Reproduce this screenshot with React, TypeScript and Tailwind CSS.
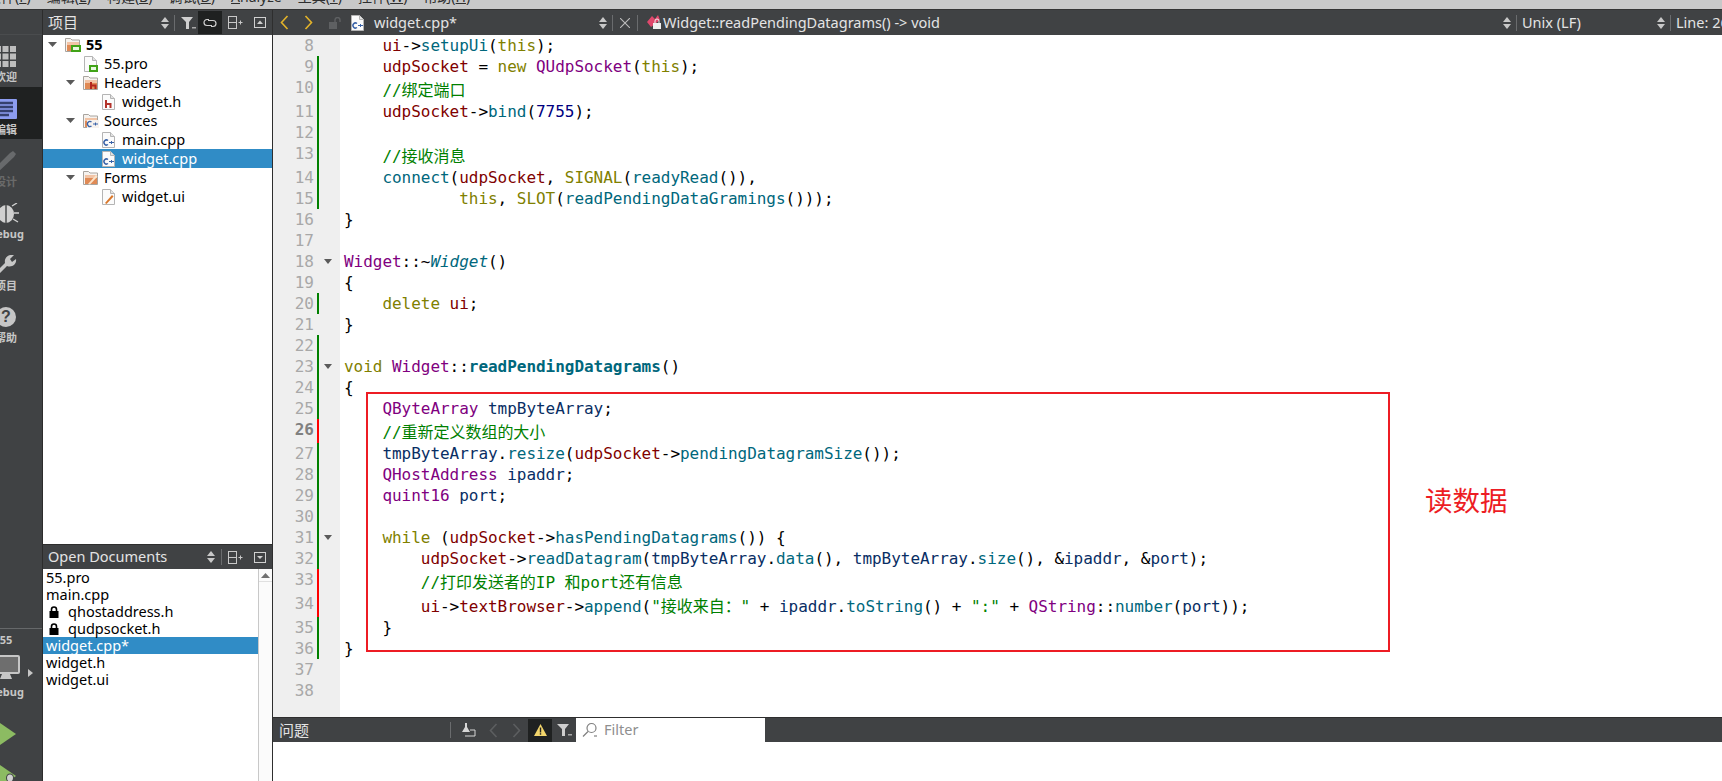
import React from "react";

const ui = "font-['Noto_Sans','Noto_Sans_CJK_SC',sans-serif]";

type Tok = [string, string?];
const C: Record<string, string> = {
  k: "text-[#808000]",
  t: "text-[#800080]",
  m: "text-[#800000]",
  f: "text-[#00677c]",
  c: "text-[#008000]",
  n: "text-[#000080]",
  v: "text-[#092e64]",
  b: "text-[#00677c] font-bold",
  i: "text-[#00677c] italic",
};

type Line = { n: number; toks: Tok[]; tall?: boolean; bar?: "g" | "r"; fold?: boolean; cur?: boolean };

const lines: Line[] = [
  { n: 8, toks: [["    "], ["ui", "m"], ["->"], ["setupUi", "f"], ["("], ["this", "k"], [");"]] },
  { n: 9, bar: "g", toks: [["    "], ["udpSocket", "m"], [" = "], ["new", "k"], [" "], ["QUdpSocket", "t"], ["("], ["this", "k"], [");"]] },
  { n: 10, bar: "g", tall: true, toks: [["    "], ["//绑定端口", "c"]] },
  { n: 11, bar: "g", toks: [["    "], ["udpSocket", "m"], ["->"], ["bind", "f"], ["("], ["7755", "n"], [");"]] },
  { n: 12, bar: "g", toks: [] },
  { n: 13, bar: "g", tall: true, toks: [["    "], ["//接收消息", "c"]] },
  { n: 14, bar: "g", toks: [["    "], ["connect", "f"], ["("], ["udpSocket", "m"], [", "], ["SIGNAL", "k"], ["("], ["readyRead", "f"], ["()),"]] },
  { n: 15, bar: "g", toks: [["            "], ["this", "k"], [", "], ["SLOT", "k"], ["("], ["readPendingDataGramings", "f"], ["()));"]] },
  { n: 16, toks: [["}"]] },
  { n: 17, toks: [] },
  { n: 18, fold: true, toks: [["Widget", "t"], ["::~"], ["Widget", "i"], ["()"]] },
  { n: 19, toks: [["{"]] },
  { n: 20, bar: "g", toks: [["    "], ["delete", "k"], [" "], ["ui", "m"], [";"]] },
  { n: 21, toks: [["}"]] },
  { n: 22, bar: "g", toks: [] },
  { n: 23, bar: "g", fold: true, toks: [["void", "k"], [" "], ["Widget", "t"], ["::"], ["readPendingDatagrams", "b"], ["()"]] },
  { n: 24, bar: "g", toks: [["{"]] },
  { n: 25, bar: "g", toks: [["    "], ["QByteArray", "t"], [" "], ["tmpByteArray", "v"], [";"]] },
  { n: 26, bar: "r", tall: true, cur: true, toks: [["    "], ["//重新定义数组的大小", "c"]] },
  { n: 27, bar: "g", toks: [["    "], ["tmpByteArray", "v"], ["."], ["resize", "f"], ["("], ["udpSocket", "m"], ["->"], ["pendingDatagramSize", "f"], ["());"]] },
  { n: 28, bar: "g", toks: [["    "], ["QHostAddress", "t"], [" "], ["ipaddr", "v"], [";"]] },
  { n: 29, bar: "g", toks: [["    "], ["quint16", "t"], [" "], ["port", "v"], [";"]] },
  { n: 30, bar: "g", toks: [] },
  { n: 31, bar: "g", fold: true, toks: [["    "], ["while", "k"], [" ("], ["udpSocket", "m"], ["->"], ["hasPendingDatagrams", "f"], ["()) {"]] },
  { n: 32, bar: "g", toks: [["        "], ["udpSocket", "m"], ["->"], ["readDatagram", "f"], ["("], ["tmpByteArray", "v"], ["."], ["data", "f"], ["(), "], ["tmpByteArray", "v"], ["."], ["size", "f"], ["(), &"], ["ipaddr", "v"], [", &"], ["port", "v"], [");"]] },
  { n: 33, bar: "r", tall: true, toks: [["        "], ["//打印发送者的IP 和port还有信息", "c"]] },
  { n: 34, bar: "r", tall: true, toks: [["        "], ["ui", "m"], ["->"], ["textBrowser", "m"], ["->"], ["append", "f"], ["("], ['"接收来自："', "c"], [" + "], ["ipaddr", "v"], ["."], ["toString", "f"], ["() + "], ['":"', "c"], [" + "], ["QString", "t"], ["::"], ["number", "f"], ["("], ["port", "v"], ["));"]] },
  { n: 35, bar: "g", toks: [["    }"]] },
  { n: 36, bar: "g", toks: [["}"]] },
  { n: 37, toks: [] },
  { n: 38, toks: [] },
];

function Sort() {
  return (
    <svg width="10" height="14" viewBox="0 0 10 14" className="shrink-0">
      <path d="M5 1 L9 6 H1 Z" fill="#c8c8c8" />
      <path d="M1 8 H9 L5 13 Z" fill="#c8c8c8" />
    </svg>
  );
}
function Sep() {
  return <div className="w-px h-[16px] bg-[#6a6c6e] shrink-0" />;
}
function Funnel() {
  return (
    <svg width="18" height="14" viewBox="0 0 18 14" className="shrink-0">
      <path d="M1 1 H13 L9 6 V13 H6 V6 Z" fill="#cfcfcf" />
      <rect x="12" y="11" width="4" height="1.5" fill="#a8a8a8" />
    </svg>
  );
}
function LinkIcon() {
  return (
    <svg width="14" height="10" viewBox="0 0 14 10" fill="none" stroke="#d0d0d0" strokeWidth="1.2">
      <path d="M6 1.5 H4 A3 3 0 0 0 4 7.5 H9" />
      <path d="M8 8.5 H10 A3 3 0 0 0 10 2.5 H5" />
    </svg>
  );
}
function Split() {
  return (
    <svg width="15" height="13" viewBox="0 0 15 13" fill="none" stroke="#c8c8c8" strokeWidth="1" className="shrink-0">
      <rect x="0.5" y="0.5" width="8" height="12" />
      <path d="M0.5 6.5 H8.5" />
      <path d="M10.5 6.5 H14.5 M12.5 4.5 V8.5" />
    </svg>
  );
}
function ClosePanel({ down }: { down?: boolean }) {
  return (
    <svg width="12" height="11" viewBox="0 0 12 11" className="shrink-0">
      <rect x="0.5" y="0.5" width="11" height="10" fill="none" stroke="#d0d0d0" />
      {down ? <path d="M3 4 H9 L6 7 Z" fill="#d0d0d0" /> : <path d="M3 7 L6 3.5 L9 7 Z" fill="#d0d0d0" />}
    </svg>
  );
}
function Chev({ left, color, w = 9, h = 15 }: { left?: boolean; color: string; w?: number; h?: number }) {
  return (
    <svg width={w} height={h} viewBox="0 0 9 15" fill="none" stroke={color} strokeWidth="1.6" className="shrink-0">
      <path d={left ? "M7.5 1 L1.5 7.5 L7.5 14" : "M1.5 1 L7.5 7.5 L1.5 14"} />
    </svg>
  );
}
function Arrow() {
  return (
    <svg width="9" height="5" viewBox="0 0 9 5" className="shrink-0">
      <path d="M0 0 H9 L4.5 5 Z" fill="#5a5a5a" />
    </svg>
  );
}
function FileIcon({ kind }: { kind: "qt" | "h" | "cpp" | "ui" }) {
  return (
    <svg width="15" height="16" viewBox="0 0 15 16" className="shrink-0">
      <path d="M1.5 0.5 H9.5 L13.5 4.5 V15.5 H1.5 Z" fill="#fbfbfb" stroke="#b4b4b4" />
      <path d="M9.5 0.5 V4.5 H13.5" fill="#e2e2e2" stroke="#b4b4b4" />
      {kind === "qt" && (
        <>
          <rect x="6" y="9" width="9" height="7" fill="#41a317" />
          <rect x="8" y="11" width="5" height="3" fill="#e8f8e0" />
        </>
      )}
      {kind === "h" && <path d="M5 6 V14 M5 10 H9.5 V14" fill="none" stroke="#b3332b" strokeWidth="2" />}
      {kind === "cpp" && (
        <>
          <path d="M7 8.5 A2.5 2.5 0 1 0 7 12.5" fill="none" stroke="#3a63a8" strokeWidth="1.5" />
          <path d="M8 10.5 H13 M10.5 9 V12" stroke="#3a63a8" strokeWidth="1" />
        </>
      )}
      {kind === "ui" && <path d="M4 14 L11 6 L12.5 7.5 L5.5 15 Z" fill="#d9772a" />}
    </svg>
  );
}
function FolderIcon({ kind }: { kind: "qt" | "h" | "cpp" | "ui" }) {
  return (
    <svg width="16" height="15" viewBox="0 0 16 15" className="shrink-0">
      <path d="M0.5 1.5 H5.5 L7 3 H14.5 V14.5 H0.5 Z" fill="#f6f2ee" stroke="#a8a49f" />
      <path d="M2 5 H14 V14 H2 Z" fill="#e08a55" />
      <path d="M2 5 H14 V8 H2 Z" fill="#f2c4a6" />
      {kind === "qt" && <rect x="6" y="8" width="10" height="7" fill="#41a317" />}
      {kind === "qt" && <rect x="8" y="10" width="6" height="3" fill="#e8f8e0" />}
      {kind === "h" && <path d="M8 7 V14 M8 10.5 H12.5 V14" fill="none" stroke="#b3261e" strokeWidth="2" />}
      {kind === "cpp" && (
        <>
          <rect x="4" y="7" width="12" height="8" fill="#f6f2ee" />
          <path d="M8.5 9 A2.5 2.5 0 1 0 8.5 13" fill="none" stroke="#3a63a8" strokeWidth="1.4" />
          <path d="M10 11 H15 M12.5 9.5 V12.5" stroke="#3a63a8" />
        </>
      )}
      {kind === "ui" && <path d="M5 14 L13 5 L14.5 6.5 L7 14.5 Z" fill="#fbe3c8" />}
    </svg>
  );
}

type TreeRow = { label: string; level: number; folder?: boolean; kind: "qt" | "h" | "cpp" | "ui"; sel?: boolean; bold?: boolean };
const tree: TreeRow[] = [
  { label: "55", level: 0, folder: true, kind: "qt", bold: true },
  { label: "55.pro", level: 1, kind: "qt" },
  { label: "Headers", level: 1, folder: true, kind: "h" },
  { label: "widget.h", level: 2, kind: "h" },
  { label: "Sources", level: 1, folder: true, kind: "cpp" },
  { label: "main.cpp", level: 2, kind: "cpp" },
  { label: "widget.cpp", level: 2, kind: "cpp", sel: true },
  { label: "Forms", level: 1, folder: true, kind: "ui" },
  { label: "widget.ui", level: 2, kind: "ui" },
];
const indent = ["pl-[0px]", "pl-[18px]", "pl-[36px]"];

function Tree() {
  return (
    <div className="flex-1 bg-white overflow-hidden">
      {tree.map((r) => (
        <div key={r.label} className={`h-[19px] flex items-center ${indent[r.level]} ${r.sel ? "bg-[#308cc6] text-white" : "text-black"}`}>
          <div className="w-[22px] pl-[5px] flex shrink-0">{r.folder && <Arrow />}</div>
          <div className="w-[21px] shrink-0">{r.folder ? <FolderIcon kind={r.kind} /> : <FileIcon kind={r.kind} />}</div>
          <span className={`text-[14.5px] ${r.bold ? "font-bold" : ""}`}>{r.label}</span>
        </div>
      ))}
    </div>
  );
}

function LockIcon({ color = "#000" }: { color?: string }) {
  return (
    <svg width="10" height="12" viewBox="0 0 10 12" className="shrink-0">
      <path d="M2.5 5.5 V3.5 A2.5 2.5 0 0 1 7.5 3.5 V5.5" fill="none" stroke={color} strokeWidth="1.6" />
      <rect x="0.5" y="5" width="9" height="7" fill={color} />
    </svg>
  );
}

function OpenLock() {
  return (
    <svg width="12" height="12" viewBox="0 0 12 12" className="shrink-0">
      <path d="M6 5.5 V3 A2.5 2.5 0 0 1 11 3 V5" fill="none" stroke="#5e6062" strokeWidth="1.4" />
      <rect x="0" y="5" width="8" height="7" fill="#5e6062" />
    </svg>
  );
}

const docs = [
  { t: "55.pro" },
  { t: "main.cpp" },
  { t: "qhostaddress.h", lock: true },
  { t: "qudpsocket.h", lock: true },
  { t: "widget.cpp*", sel: true },
  { t: "widget.h" },
  { t: "widget.ui" },
];

function OpenDocs() {
  return (
    <div className="h-[237px] flex flex-col border-t border-[#2e2e2e] shrink-0">
      <div className="h-[24px] bg-[#404244] flex items-center pl-[5px] shrink-0">
        <span className="text-[14.5px] text-[#e4e4e4] flex-1">Open Documents</span>
        <Sort />
        <div className="w-[5px]" />
        <Sep />
        <div className="w-[6px]" />
        <Split />
        <div className="w-[11px]" />
        <ClosePanel down />
        <div className="w-[6px]" />
      </div>
      <div className="flex-1 bg-white flex overflow-hidden">
        <div className="flex-1">
          {docs.map((d) => (
            <div key={d.t} className={`h-[17px] flex items-center text-[14.5px] pl-[3px] ${d.sel ? "bg-[#308cc6] text-white" : "text-black"}`}>
              {d.lock && (
                <div className="w-[22px] pl-[3px] shrink-0">
                  <LockIcon />
                </div>
              )}
              <span>{d.t}</span>
            </div>
          ))}
        </div>
        <div className="w-[14px] bg-[#fbfbfb] border-l border-[#c8c8c8] shrink-0 flex flex-col">
          <div className="h-[13px] border-b border-[#e0e0e0] flex justify-center items-center">
            <svg width="9" height="5" viewBox="0 0 9 5">
              <path d="M0 5 L4.5 0 L9 5 Z" fill="#707070" />
            </svg>
          </div>
        </div>
      </div>
    </div>
  );
}

function Side({ label, active, dim, children }: { label: string; active?: boolean; dim?: boolean; children: React.ReactNode }) {
  return (
    <div className={`h-[52px] w-[43px] shrink-0 ${active ? "bg-[#1f2121]" : ""}`}>
      <div className="-ml-[17px] w-[46px] h-full flex flex-col items-center justify-end pb-[1px]">
        <div className="h-[22px] flex items-center justify-center">{children}</div>
        <span className={`text-[11px] font-bold leading-[16px] mt-[2px] whitespace-nowrap ${dim ? "text-[#6a6a6a]" : "text-[#c6c6c6]"}`}>{label}</span>
      </div>
    </div>
  );
}

function Sidebar() {
  return (
    <div className="w-[43px] shrink-0 bg-[#404244] border-r border-[#2c2c2c] flex flex-col overflow-hidden">
      <div className="h-[25px] shrink-0 border-b border-[#4a4c4e]" />
      <div className="h-[52px] w-[43px] shrink-0">
        <div className="-ml-[17px] w-[46px] h-full flex flex-col items-center justify-end pb-[2px]">
          <svg width="22" height="21" viewBox="0 0 22 21">
            {[0, 7.5, 15].map((x) => [0, 7.5, 15].map((y) => <rect key={`${x}${y}`} x={x} y={y} width="6" height="6" fill="#bdbdbd" />))}
          </svg>
          <span className="text-[11px] font-bold leading-[16px] mt-[2px] whitespace-nowrap text-[#c6c6c6]">欢迎</span>
        </div>
      </div>
      <Side label="编辑" active>
        <svg width="22" height="20" viewBox="0 0 22 20">
          <rect width="22" height="20" rx="1" fill="#8c9cf0" />
          <path d="M4 4 H18 M4 8 H18 M4 12 H18 M4 16 H14" stroke="#35406e" strokeWidth="2.4" />
        </svg>
      </Side>
      <Side label="设计" dim>
        <svg width="24" height="21" viewBox="0 0 24 21">
          <path d="M0 18 L16 2 L19 0 L22 3 L20 6 L4 21 L0 21 Z" fill="#686a6c" />
        </svg>
      </Side>
      <Side label="Debug">
        <svg width="28" height="20" viewBox="0 0 28 20">
          <ellipse cx="14" cy="11" rx="8" ry="9" fill="#d0d0d0" />
          <path d="M14 2 V20" stroke="#404244" strokeWidth="1.4" />
          <path d="M8 3 L3 0 M20 3 L25 0 M6 10 H1 M22 10 H27 M7 16 L2 19 M21 16 L26 19" stroke="#d0d0d0" strokeWidth="1.4" />
        </svg>
      </Side>
      <Side label="项目">
        <svg width="24" height="21" viewBox="0 0 24 21">
          <path d="M0 20 L11 9 C10 4 14 0 20 1 L16 5 L18 8 L22 5 C23 10 18 14 13 12 L3 22 Z" fill="#c6c6c6" transform="translate(0 -1)" />
        </svg>
      </Side>
      <Side label="帮助">
        <div className="w-[20px] h-[20px] rounded-full bg-[#c6c6c6] flex items-center justify-center text-[16px] font-bold text-[#404244] leading-none font-['Liberation_Sans',sans-serif]">?</div>
      </Side>
      <div className="flex-1" />
      <div className="h-px bg-[#66686a] shrink-0" />
      <div className="h-[76px] shrink-0 relative">
        <div className="-ml-[17px] w-[46px] flex flex-col items-center pt-[3px]">
          <span className="text-[11px] leading-[16px] text-[#c6c6c6] font-bold">55</span>
          <svg width="28" height="26" viewBox="0 0 28 26" className="mt-[7px]">
            <rect x="1" y="1" width="26" height="17" rx="1" fill="#6e6e6e" stroke="#c6c6c6" strokeWidth="2" />
            <path d="M10 19 H18 L20 24 H8 Z" fill="#c6c6c6" />
          </svg>
          <span className="text-[11px] font-bold leading-[16px] mt-[3px] text-[#c6c6c6]">Debug</span>
        </div>
        <svg width="5" height="8" viewBox="0 0 5 8" className="absolute left-[28px] top-[40px]">
          <path d="M0 0 L5 4 L0 8 Z" fill="#c6c6c6" />
        </svg>
      </div>
      <div className="flex-1 max-h-[18px]" />
      <svg width="16" height="22" viewBox="0 0 16 22" className="shrink-0">
        <path d="M0 0 L16 11 L0 22 Z" fill="#8cbb62" />
      </svg>
      <div className="h-[20px] shrink-0" />
      <svg width="16" height="16" viewBox="0 0 16 16" className="shrink-0">
        <path d="M0 0 L16 11 L0 22 Z" fill="#8cbb62" />
        <ellipse cx="10" cy="13" rx="4" ry="4.5" fill="#404244" />
        <ellipse cx="10" cy="13" rx="3" ry="3.5" fill="#d0d0d0" />
      </svg>
    </div>
  );
}

function Code({ l }: { l: Line }) {
  return (
    <div className={`flex bg-white shrink-0 ${l.tall ? "h-[24px]" : "h-[21px]"}`}>
      <div className="w-[67px] bg-[#efefef] flex shrink-0">
        <div className={`w-[41px] text-right leading-[21px] shrink-0 ${l.cur ? "font-bold text-[#808080]" : "text-[#a8a8a8]"}`}>{l.n}</div>
        <div className="w-[3px] shrink-0" />
        <div className={`w-[2px] shrink-0 ${l.bar === "g" ? "bg-[#008000]" : l.bar === "r" ? "bg-[#ff0000]" : ""}`} />
        <div className="flex-1 flex justify-center pt-[8px] pr-[3px]">
          {l.fold && (
            <svg width="8" height="5" viewBox="0 0 8 5" className="shrink-0">
              <path d="M0 0 H8 L4 5 Z" fill="#5a5a5a" />
            </svg>
          )}
        </div>
      </div>
      <pre className={`pl-[4px] leading-[21px] m-0 font-[inherit] tracking-[-0.035px] text-black whitespace-pre ${l.tall ? "pt-[3px]" : ""}`}>
        {l.toks.map((t, i) => (
          <span key={i} className={t[1] ? C[t[1]] : ""}>
            {t[0]}
          </span>
        ))}
      </pre>
    </div>
  );
}

function Toolbar() {
  return (
    <div className="h-[25px] bg-[#404244] flex items-center shrink-0 overflow-hidden whitespace-nowrap text-[14.5px] text-[#e4e4e4]">
      <div className="w-[7px] shrink-0" />
      <Chev left color="#e3b32a" />
      <div className="w-[15px] shrink-0" />
      <Chev color="#e3b32a" />
      <div className="w-[16px] shrink-0" />
      <OpenLock />
      <div className="w-[9px] shrink-0" />
      <FileIcon kind="cpp" />
      <div className="w-[9px] shrink-0" />
      <span className="w-[224px] shrink-0">widget.cpp*</span>
      <Sort />
      <div className="w-[4px] shrink-0" />
      <Sep />
      <div className="w-[7px] shrink-0" />
      <svg width="10" height="10" viewBox="0 0 10 10" stroke="#bcbcbc" strokeWidth="1.1" className="shrink-0">
        <path d="M0 0 L10 10 M10 0 L0 10" />
      </svg>
      <div className="w-[7px] shrink-0" />
      <Sep />
      <div className="w-[9px] shrink-0" />
      <svg width="16" height="15" viewBox="0 0 16 15" className="shrink-0">
        <path d="M0 7 L5 1 L8 4 L11 0 L13 5 L8 9 L4 12 Z" fill="#e0486c" />
        <rect x="6" y="8" width="8" height="6" fill="#f0f0f0" />
        <path d="M8 8 V6 A2 2 0 0 1 12 6 V8" fill="none" stroke="#f0f0f0" />
      </svg>
      <span className="w-[839px] shrink-0">Widget::readPendingDatagrams() -&gt; void</span>
      <Sort />
      <div className="w-[4px] shrink-0" />
      <Sep />
      <span className="pl-[5px] w-[139px] shrink-0">Unix (LF)</span>
      <Sort />
      <div className="w-[4px] shrink-0" />
      <Sep />
      <span className="pl-[5px] shrink-0">Line: 26, Col: 1</span>
    </div>
  );
}

function Issues() {
  return (
    <div className="h-[64px] shrink-0 flex flex-col border-t border-[#2e2e2e]">
      <div className="h-[24px] bg-[#404244] flex items-center shrink-0 text-[14.5px] text-[#e4e4e4]">
        <span className="pl-[6px] w-[177px] text-[15px]">问题</span>
        <Sep />
        <div className="w-[10px]" />
        <svg width="15" height="14" viewBox="0 0 15 14" className="shrink-0">
          <path d="M4 0 H6 V4 L9 9 H1 L4 4 Z" fill="#d6d6d6" />
          <path d="M9 7 H14 V13 H4" fill="none" stroke="#d6d6d6" />
        </svg>
        <div className="w-[13px]" />
        <Chev left color="#5c5e60" />
        <div className="w-[14px]" />
        <Chev color="#5c5e60" />
        <div className="w-[7px]" />
        <div className="w-[24px] h-[23px] bg-[#1f2121] flex items-center justify-center shrink-0">
          <svg width="13" height="12" viewBox="0 0 13 12">
            <path d="M6.5 0 L13 12 H0 Z" fill="#f2d56b" />
            <rect x="5.8" y="3.5" width="1.4" height="5" fill="#222" />
            <rect x="5.8" y="9.2" width="1.4" height="1.5" fill="#222" />
          </svg>
        </div>
        <div className="w-[4px]" />
        <Funnel />
        <div className="w-[2px]" />
        <div className="w-[189px] h-[24px] bg-white flex items-center pl-[6px] shrink-0">
          <svg width="17" height="17" viewBox="0 0 17 17" fill="none" stroke="#808080" strokeWidth="1.2" className="shrink-0">
            <circle cx="9.5" cy="6" r="4.5" />
            <path d="M6 9.5 L1 14.5" />
            <path d="M12 14 H15" />
          </svg>
          <span className="pl-[5px] text-[#8f8f8f]">Filter</span>
        </div>
      </div>
      <div className="flex-1 bg-white" />
    </div>
  );
}

export default function App() {
  return (
    <div className={`w-[1722px] h-[781px] flex flex-col overflow-hidden relative bg-white ${ui}`}>
      <div className="h-[10px] shrink-0 overflow-hidden bg-[#c8c8c8] border-b border-[#333]">
        <div className="flex gap-[16px] -mt-[13px] -ml-[13px] text-[14px] leading-[20px] text-[#2e2e2e] whitespace-nowrap">
          <span>文件(<u>F</u>)</span>
          <span>编辑(<u>E</u>)</span>
          <span>构建(<u>B</u>)</span>
          <span>调试(<u>D</u>)</span>
          <span><u>A</u>nalyze</span>
          <span>工具(<u>T</u>)</span>
          <span>控件(<u>W</u>)</span>
          <span>帮助(<u>H</u>)</span>
        </div>
      </div>
      <div className="flex-1 flex min-h-0">
        <Sidebar />
        <div className="w-[230px] shrink-0 flex flex-col border-r border-[#2e2e2e]">
          <div className="h-[25px] bg-[#404244] flex items-center pl-[5px] shrink-0">
            <span className="text-[15px] text-[#e4e4e4] flex-1">项目</span>
            <Sort />
            <div className="w-[4px]" />
            <Sep />
            <div className="w-[5px]" />
            <Funnel />
            <div className="w-[24px] h-[23px] bg-[#1f2121] flex items-center justify-center shrink-0">
              <LinkIcon />
            </div>
            <div className="w-[6px]" />
            <Split />
            <div className="w-[11px]" />
            <ClosePanel />
            <div className="w-[6px]" />
          </div>
          <Tree />
          <OpenDocs />
        </div>
        <div className="flex-1 min-w-0 flex flex-col">
          <Toolbar />
          <div className="flex-1 min-h-0 bg-white overflow-hidden font-['DejaVu_Sans_Mono','Noto_Sans_CJK_SC',monospace] text-[16px] flex flex-col">
            {lines.map((l) => (
              <Code key={l.n} l={l} />
            ))}
            <div className="flex-1 w-[67px] bg-[#efefef]" />
          </div>
          <Issues />
        </div>
      </div>
      <div className="absolute left-[366px] top-[392px] w-[1024px] h-[260px] border-2 border-[#ed1c24] pointer-events-none" />
      <div className="absolute left-[1425px] top-[481px] text-[27.5px] leading-[36px] text-[#ed1c24] font-['Noto_Sans_CJK_SC',sans-serif]">读数据</div>
    </div>
  );
}
